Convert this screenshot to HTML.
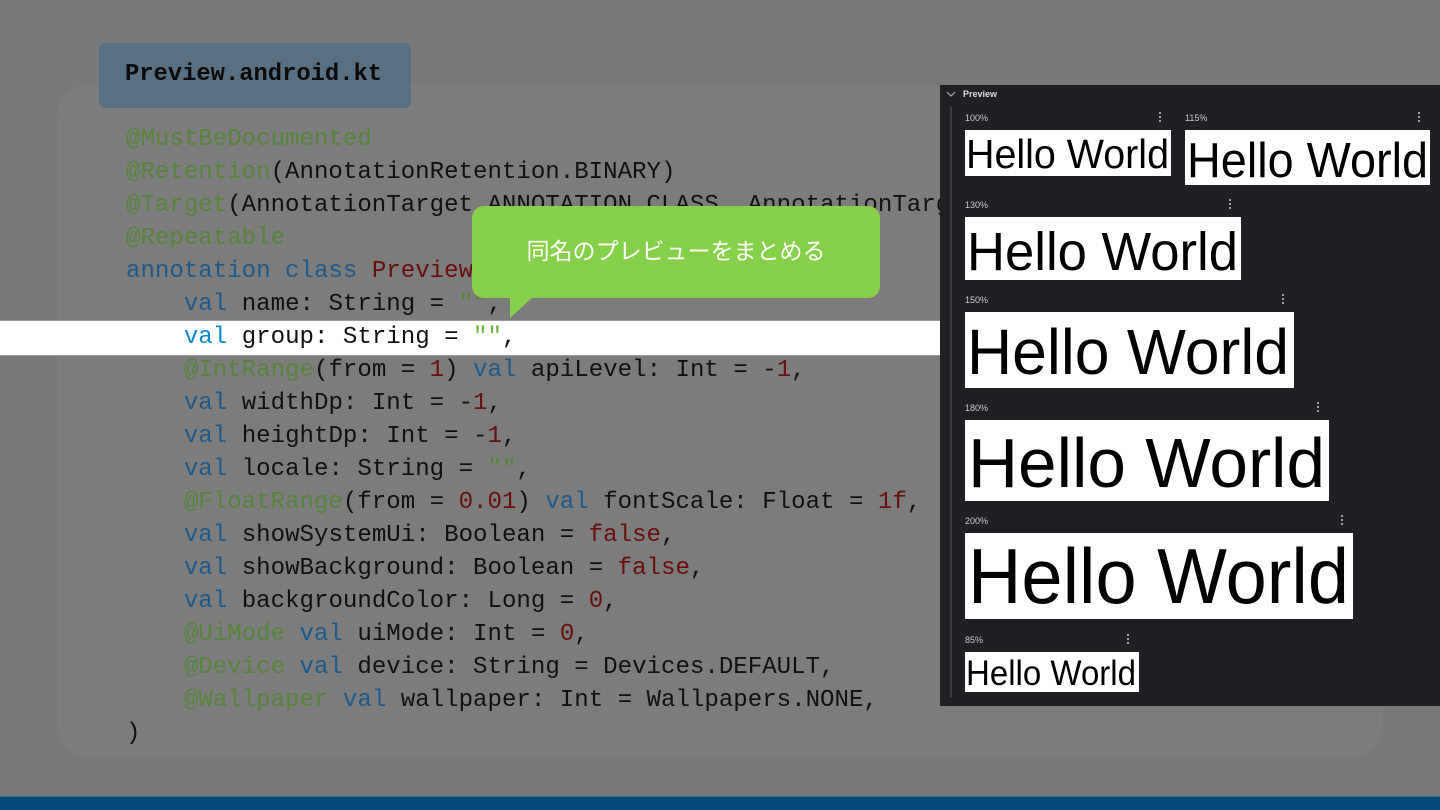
<!DOCTYPE html>
<html><head><meta charset="utf-8"><style>
*{margin:0;padding:0;box-sizing:border-box}
body{width:1440px;height:810px;background:#787878;position:relative;overflow:hidden;font-family:"Liberation Sans","Noto Sans CJK JP",sans-serif}
.panel{position:absolute;left:57px;top:85px;width:1326px;height:673px;background:#7c7c7c;border-radius:32px}
.tab{position:absolute;left:99px;top:43px;width:312px;height:65px;background:#587083;border-radius:6px;font:bold 23.8px "Liberation Mono",monospace;color:#0b0b0b;padding:18px 0 0 26px}
.code{position:absolute;left:126px;top:123px;font:24.1px/33px "Liberation Mono",monospace;color:#111;white-space:pre}
.a{color:#57853a}.k{color:#1d5a8c}.n{color:#6b0e0e}.s{color:#57853a}
.hl{position:absolute;left:0;top:320px;width:940px;height:36px;background:#fff;border-top:1px solid #999;border-bottom:1px solid #999}
.bar{position:absolute;left:0;top:796px;width:1440px;height:14px;background:#054a7a;border-top:1px solid #3a6d96}
.callout{position:absolute;left:472px;top:206px;width:408px;height:92px;background:#86d04a;border-radius:12px;color:#fff;font-size:23px;text-align:center;line-height:90px}
.tri{position:absolute;left:510px;top:296px;width:0;height:0;border-right:24px solid transparent;border-top:22px solid #86d04a}
.pv{position:absolute;left:940px;top:85px;width:500px;height:621px;background:#1f2023}
</style></head><body>
<div class="panel"></div>
<div class="tab">Preview.android.kt</div>
<div class="hl"></div>
<div class="code"><span class="a">@MustBeDocumented</span>
<span class="a">@Retention</span>(AnnotationRetention.BINARY)
<span class="a">@Target</span>(AnnotationTarget.ANNOTATION_CLASS, AnnotationTarget.FUNCTION)
<span class="a">@Repeatable</span>
<span class="k">annotation class</span> <span class="n">Preview</span>(
    <span class="k">val</span> name: String = <span class="s">""</span>,
    <span style="color:#0a8ad0">val</span> group: String = <span style="color:#6db33a">""</span>,
    <span class="a">@IntRange</span>(from = <span class="n">1</span>) <span class="k">val</span> apiLevel: Int = -<span class="n">1</span>,
    <span class="k">val</span> widthDp: Int = -<span class="n">1</span>,
    <span class="k">val</span> heightDp: Int = -<span class="n">1</span>,
    <span class="k">val</span> locale: String = <span class="s">""</span>,
    <span class="a">@FloatRange</span>(from = <span class="n">0.01</span>) <span class="k">val</span> fontScale: Float = <span class="n">1f</span>,
    <span class="k">val</span> showSystemUi: Boolean = <span class="n">false</span>,
    <span class="k">val</span> showBackground: Boolean = <span class="n">false</span>,
    <span class="k">val</span> backgroundColor: Long = <span class="n">0</span>,
    <span class="a">@UiMode</span> <span class="k">val</span> uiMode: Int = <span class="n">0</span>,
    <span class="a">@Device</span> <span class="k">val</span> device: String = Devices.DEFAULT,
    <span class="a">@Wallpaper</span> <span class="k">val</span> wallpaper: Int = Wallpapers.NONE,
)</div>
<div class="callout">同名のプレビューをまとめる</div>
<div class="tri"></div>
<div class="pv"></div>
<svg style="position:absolute;left:0;top:0" width="1440" height="810" font-family="Liberation Sans, sans-serif">
<polyline points="947,92 951,96 955,92" fill="none" stroke="#aaa" stroke-width="1.2"/>
<text x="963" y="97" font-size="9" font-weight="bold" fill="#ddd">Preview</text>
<rect x="950" y="107" width="2" height="590" fill="#3a3b3f"/>
<g font-size="9" fill="#ccc">
<text x="965" y="121">100%</text><text x="1185" y="121">115%</text><text x="965" y="208">130%</text>
<text x="965" y="303">150%</text><text x="965" y="411">180%</text><text x="965" y="524">200%</text><text x="965" y="643">85%</text>
</g>
<g fill="#ccc">
<circle cx="1160" cy="113" r="1"/><circle cx="1160" cy="117" r="1"/><circle cx="1160" cy="121" r="1"/>
<circle cx="1419" cy="113" r="1"/><circle cx="1419" cy="117" r="1"/><circle cx="1419" cy="121" r="1"/>
<circle cx="1230" cy="200" r="1"/><circle cx="1230" cy="204" r="1"/><circle cx="1230" cy="208" r="1"/>
<circle cx="1283" cy="295" r="1"/><circle cx="1283" cy="299" r="1"/><circle cx="1283" cy="303" r="1"/>
<circle cx="1318" cy="403" r="1"/><circle cx="1318" cy="407" r="1"/><circle cx="1318" cy="411" r="1"/>
<circle cx="1342" cy="516" r="1"/><circle cx="1342" cy="520" r="1"/><circle cx="1342" cy="524" r="1"/>
<circle cx="1128" cy="635" r="1"/><circle cx="1128" cy="639" r="1"/><circle cx="1128" cy="643" r="1"/>
</g>
<g fill="#fff">
<rect x="965" y="130" width="206" height="46"/><rect x="1185" y="130" width="245" height="55"/>
<rect x="965" y="217" width="276" height="63"/><rect x="965" y="312" width="329" height="76"/>
<rect x="965" y="420" width="364" height="81"/><rect x="965" y="533" width="388" height="86"/>
<rect x="965" y="652" width="174" height="40"/>
</g>
<g fill="#000">
<text x="966" y="168" font-size="41" textLength="203" lengthAdjust="spacingAndGlyphs">Hello World</text>
<text x="1187" y="177" font-size="49" textLength="241" lengthAdjust="spacingAndGlyphs">Hello World</text>
<text x="967" y="270" font-size="54" textLength="271" lengthAdjust="spacingAndGlyphs">Hello World</text>
<text x="967" y="374" font-size="64" textLength="322" lengthAdjust="spacingAndGlyphs">Hello World</text>
<text x="968" y="487" font-size="70" textLength="357" lengthAdjust="spacingAndGlyphs">Hello World</text>
<text x="968" y="603" font-size="78" textLength="381" lengthAdjust="spacingAndGlyphs">Hello World</text>
<text x="966" y="685" font-size="35" textLength="170" lengthAdjust="spacingAndGlyphs">Hello World</text>
</g>
</svg>
<div class="bar"></div>
</body></html>
